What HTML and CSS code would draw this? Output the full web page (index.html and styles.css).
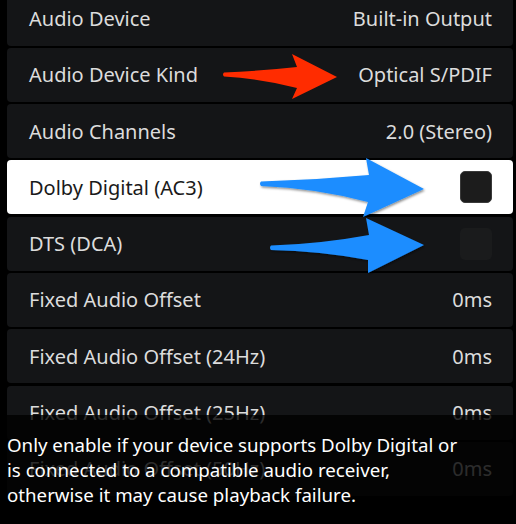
FILE: index.html
```html
<!DOCTYPE html>
<html>
<head>
<meta charset="utf-8">
<link rel="stylesheet" href="styles.css">
</head>
<body>
<div class="screen">
  <div class="list">
    <div class="row"><span class="label">Audio Device</span><span class="value">Built-in Output</span></div>
    <div class="row"><span class="label">Audio Device Kind</span><span class="value">Optical S/PDIF</span></div>
    <div class="row"><span class="label">Audio Channels</span><span class="value">2.0 (Stereo)</span></div>
    <div class="row focused"><span class="label">Dolby Digital (AC3)</span><span class="check"></span></div>
    <div class="row"><span class="label">DTS (DCA)</span><span class="check dim"></span></div>
    <div class="row"><span class="label">Fixed Audio Offset</span><span class="value">0ms</span></div>
    <div class="row"><span class="label">Fixed Audio Offset (24Hz)</span><span class="value">0ms</span></div>
    <div class="row"><span class="label">Fixed Audio Offset (25Hz)</span><span class="value">0ms</span></div>
    <div class="row"><span class="label">Fixed Audio Offset (50Hz)</span><span class="value">0ms</span></div>
  </div>

  <svg class="arrows" width="516" height="524" viewBox="0 0 516 524">
    <defs>
      <filter id="sh" x="-10%" y="-20%" width="130%" height="150%">
        <feDropShadow dx="1" dy="1.5" stdDeviation="1.2" flood-color="#000" flood-opacity="0.45"/>
      </filter>
    </defs>
    <path fill="#ff2c00" d="M224 72.5 Q260 71 297 67 L292 54 L337 77 L292 99 L297 88 Q262 79 224 76.5 Q222 74.5 224 72.5 Z"/>
    <path fill="#1b8dff" filter="url(#sh)" d="M261 181.5 Q315 180 369 175 L366 158 L424 189 L363 217 L368 202 Q315 188 261 186 Q259 183.7 261 181.5 Z"/>
    <path fill="#1b8dff" filter="url(#sh)" d="M271 245.5 Q320 244 369 235 L366 218 L424 245 L368 273 L368 260 Q320 251 271 250 Q269 247.7 271 245.5 Z"/>
  </svg>

  <div class="tip">Only enable if your device supports Dolby Digital or is connected to a compatible audio receiver, otherwise it may cause playback failure.</div>
</div>
</body>
</html>
```

FILE: styles.css
```css
html, body {
  margin: 0;
  padding: 0;
  background: #000;
}
body {
  width: 516px;
  height: 524px;
  overflow: hidden;
  font-family: "Noto Sans", "Open Sans", sans-serif;
}
.screen {
  position: relative;
  width: 516px;
  height: 524px;
  overflow: hidden;
}
.list {
  display: flex;
  flex-direction: column;
  gap: 2.3px;
  padding: 0 3px 0 7px;
  margin-top: -8.5px;
}
.row {
  flex: none;
  height: 54px;
  border-radius: 4px;
  background: #141517;
  display: flex;
  align-items: center;
  justify-content: space-between;
  padding: 0 21px 0 22px;
  color: #dcdcdc;
  font-size: 20px;
}
.row.focused {
  background: #fff;
  color: #1a1a1a;
}
.check {
  width: 32px;
  height: 32px;
  border-radius: 5px;
  background: #1c1c1c;
  box-sizing: border-box;
  border: 1px solid #3a3a3a;
}
.check.dim {
  background: #1a1b1c;
  border: none;
}
.arrows {
  position: absolute;
  left: 0;
  top: 0;
}
.tip {
  position: absolute;
  left: 0;
  right: 0;
  top: 415px;
  bottom: 0;
  background: rgba(0, 0, 0, 0.8);
  color: #fff;
  font-size: 18.7px;
  line-height: 25px;
  padding: 17px 50px 0 7px;
}
```
